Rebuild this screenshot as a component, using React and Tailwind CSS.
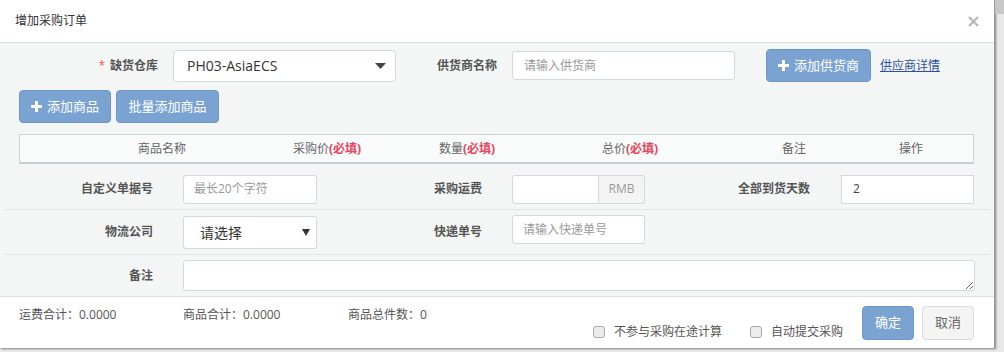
import React from "react";

const font = { fontFamily: '"Open Sans", "Noto Sans CJK SC", sans-serif' };

function Plus() {
  return (
    <svg width="11" height="11" viewBox="0 0 11 11" className="inline-block">
      <rect x="4" y="0" width="3" height="11" fill="white" />
      <rect x="0" y="4" width="11" height="3" fill="white" />
    </svg>
  );
}

function Label({ children, w, className = "" }) {
  return (
    <div className={`shrink-0 text-right text-[12px] font-bold text-[#555] ${className}`} style={{ width: w }}>
      {children}
    </div>
  );
}

export default function App() {
  return (
    <div className="w-[1004px] h-[352px] bg-[#e9e9e9] flex overflow-hidden text-[#555]" style={font}>
      <div className="w-[995px] h-[348px] bg-white flex flex-col shrink-0 shadow-[1px_1px_2px_rgba(0,0,0,0.45)] border-r border-[#9a9a9a]">
        {/* header */}
        <div className="h-[43px] shrink-0 flex items-center justify-between pl-[15px] pr-[15px] border-b border-[#d7dbdc]">
          <div className="text-[12px] text-[#333]">增加采购订单</div>
          <svg width="11" height="11" viewBox="0 0 11 11" className="mt-[1px]">
            <path d="M1 1L10 10M10 1L1 10" stroke="#b4b4b4" strokeWidth="2" />
          </svg>
        </div>
        {/* body */}
        <div className="h-[254px] shrink-0 bg-[#f4f6f6] flex flex-col border-b border-[#dcdfe0]">
          <div className="px-[19px] pt-[6px]">
            {/* row 1 */}
            <div className="flex items-center h-[33px]">
              <Label w={139}>
                <span className="text-[#e85a5a] font-normal mr-[5px]">*</span>缺货仓库
              </Label>
              <div className="ml-[15px] w-[223px] h-[32px] bg-white border border-[#d4d9db] rounded-[4px] flex items-center justify-between pl-[13px] pr-[9px]">
                <span className="text-[14px] text-[#333]">PH03-AsiaECS</span>
                <svg width="11" height="6" viewBox="0 0 11 6"><path d="M0 0h11L5.5 6z" fill="#444" /></svg>
              </div>
              <Label w={101}>供货商名称</Label>
              <div className="ml-[15px] w-[223px] h-[29px] bg-white border border-[#d4d9db] rounded-[3px] flex items-center pl-[11px] text-[12px] text-[#999]">
                请输入供货商
              </div>
              <div className="ml-[31px] w-[105px] h-[33px] bg-[#7ba3d2] border border-[#6e97c8] rounded-[4px] flex items-center justify-center gap-[5px] text-white text-[13px]">
                <Plus />添加供货商
              </div>
              <a className="ml-[9px] text-[12px] text-[#2f50a8] underline">供应商详情</a>
            </div>
            {/* row 2 */}
            <div className="flex gap-[5px] mt-[8px]">
              <div className="w-[92px] h-[33px] bg-[#7ba3d2] border border-[#6e97c8] rounded-[4px] flex items-center justify-center gap-[5px] text-white text-[13px]">
                <Plus />添加商品
              </div>
              <div className="w-[103px] h-[33px] bg-[#7ba3d2] border border-[#6e97c8] rounded-[4px] flex items-center justify-center text-white text-[13px]">
                批量添加商品
              </div>
            </div>
            {/* table header */}
            <div className="mt-[11px] w-[955px] h-[30px] bg-[#f9fafa] border border-[#ccd5d6] border-b-[2px] border-b-[#c5d0d2] flex items-center text-[12px] text-[#666]">
              <div className="w-[62px]" />
              <div className="w-[160px] text-center">商品名称</div>
              <div className="w-[170px] text-center">采购价<span className="text-[#e8445a] font-bold">(必填)</span></div>
              <div className="w-[110px] text-center">数量<span className="text-[#e8445a] font-bold">(必填)</span></div>
              <div className="w-[216px] text-center">总价<span className="text-[#e8445a] font-bold">(必填)</span></div>
              <div className="w-[112px] text-center">备注</div>
              <div className="w-[122px] text-center">操作</div>
            </div>
          </div>
          {/* form rows */}
          <div className="mx-[4px] mt-[10px]">
            <div className="flex items-center h-[30px]">
              <Label w={149}>自定义单据号</Label>
              <div className="ml-[30px] w-[134px] h-[29px] bg-white border border-[#d4d9db] rounded-[3px] flex items-center pl-[10px] text-[12px] text-[#999]">
                最长20个字符
              </div>
              <Label w={165}>采购运费</Label>
              <div className="ml-[30px] w-[133px] h-[29px] flex">
                <div className="flex-1 bg-white border border-[#d4d9db] rounded-l-[3px]" />
                <div className="w-[46px] bg-[#f4f4f4] border border-l-0 border-[#d4d9db] rounded-r-[3px] flex items-center justify-center text-[12px] text-[#999]">
                  RMB
                </div>
              </div>
              <Label w={165}>全部到货天数</Label>
              <div className="ml-[31px] w-[133px] h-[29px] bg-white border border-[#d4d9db] flex items-center pl-[11px] text-[12px] text-[#444]">
                2
              </div>
            </div>
            <div className="mt-[5px] border-t border-[#e1e4e5]" />
            <div className="flex items-center h-[34px] mt-[5px]">
              <Label w={149}>物流公司</Label>
              <div className="ml-[30px] w-[134px] h-[33px] bg-white border border-[#d4d9db] rounded-[3px] flex items-center justify-between pl-[16px] pr-[6px]">
                <span className="text-[14px] text-[#333]">请选择</span>
                <svg width="8" height="7" viewBox="0 0 8 7"><path d="M0 0h8L4 7z" fill="#333" /></svg>
              </div>
              <Label w={165}>快递单号</Label>
              <div className="ml-[30px] w-[133px] h-[29px] self-start bg-white border border-[#d4d9db] rounded-[3px] flex items-center pl-[10px] text-[12px] text-[#999]">
                请输入快递单号
              </div>
            </div>
            <div className="mt-[5px] border-t border-[#e1e4e5]" />
            <div className="flex items-center h-[31px] mt-[5px]">
              <Label w={149}>备注</Label>
              <textarea className="ml-[30px] w-[792px] h-[31px] bg-white border border-[#d4d9db] rounded-[3px] resize" />
            </div>
          </div>
        </div>
        {/* footer */}
        <div className="flex-1 relative px-[19px] text-[12px] text-[#555]">
          <div className="flex pt-[9px]">
            <div className="w-[164px]">运费合计：0.0000</div>
            <div className="w-[165px]">商品合计：0.0000</div>
            <div>商品总件数：0</div>
          </div>
          <div className="absolute right-[20px] top-[8px] flex items-center">
            <div className="w-[12px] h-[12px] border border-[#aaa] bg-[#ececec] rounded-[3px] mt-[18px]" />
            <div className="ml-[9px] mt-[18px]">不参与采购在途计算</div>
            <div className="ml-[28px] w-[12px] h-[12px] border border-[#aaa] bg-[#ececec] rounded-[3px] mt-[18px]" />
            <div className="ml-[9px] mt-[18px]">自动提交采购</div>
            <div className="ml-[19px] w-[52px] h-[34px] bg-[#7ba3d2] border border-[#6e97c8] rounded-[4px] flex items-center justify-center text-white text-[13px]">
              确定
            </div>
            <div className="ml-[8px] w-[52px] h-[34px] bg-[#f4f4f4] border border-[#dcdcdc] rounded-[4px] flex items-center justify-center text-[#666] text-[13px]">
              取消
            </div>
          </div>
        </div>
      </div>
      <div className="flex-1 flex flex-col">
        <div className="h-[14px] w-full bg-[#c8c8c8]" />
      </div>
    </div>
  );
}
